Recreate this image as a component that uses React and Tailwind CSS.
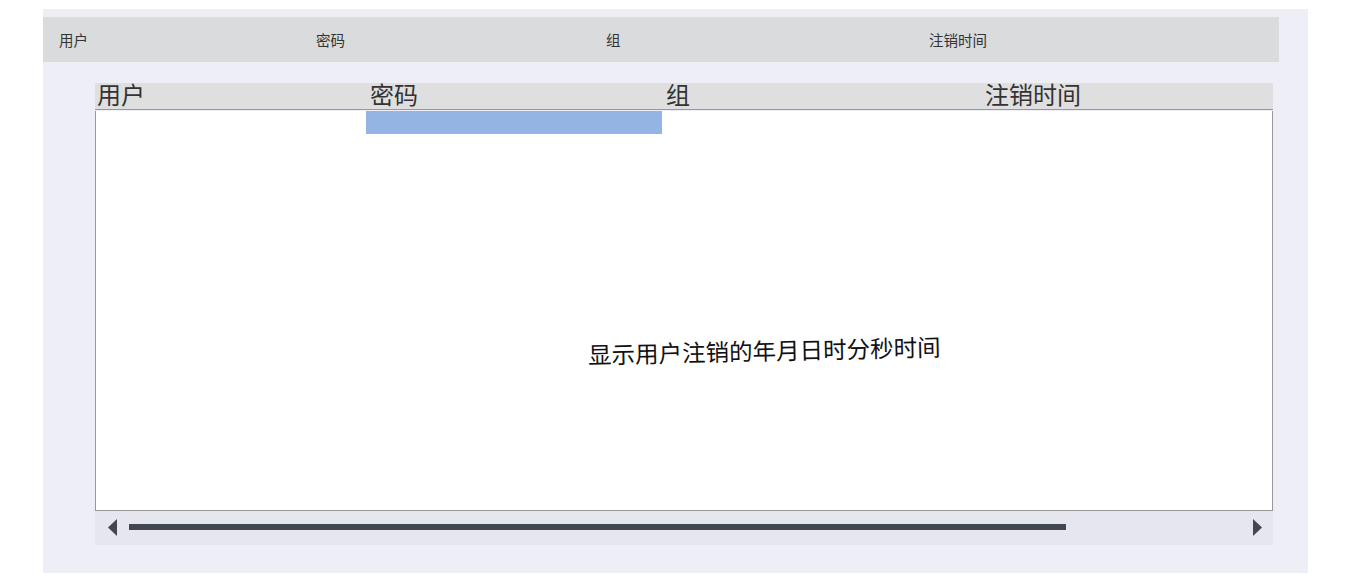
export default function App() {
  const sans = { fontFamily: '"Noto Sans CJK SC", "Noto Sans", sans-serif' }
  return (
    <div className="w-[1350px] h-[581px] bg-white pt-[9px] pl-[43px]" style={sans}>
      <div className="w-[1265px] h-[564px] bg-[#eeeef7] pt-[8px]">
        {/* top header */}
        <div className="w-[1236px] h-[45px] bg-[#dadbdd] grid grid-cols-[257px_290px_323px_1fr] items-center pl-[16px] text-[14.5px] text-[#333]">
          <span>用户</span>
          <span>密码</span>
          <span>组</span>
          <span>注销时间</span>
        </div>

        {/* inner table */}
        <div className="ml-[52px] mt-[21px] w-[1178px]">
          <div className="h-[27px] bg-[#dfdfdf] grid grid-cols-[271px_296px_323px_1fr] items-center text-[24px] leading-none text-[#333] border-b border-[#999]" style={{ fontFamily: '"Liberation Serif", "Noto Sans CJK SC", serif' }}>
            <span className="pl-[2px]">用户</span>
            <span className="pl-[4px]">密码</span>
            <span className="pl-[4px]">组</span>
            <span>注销时间</span>
          </div>
          <div className="h-[400px] bg-white border-x border-b border-[#999] relative">
            <div className="ml-[270px] mt-[1px] w-[296px] h-[23px] bg-[#94b4e4]" />
            <div className="absolute left-[492px] top-[222px] text-[23.5px] text-[#111] -rotate-[1.3deg] whitespace-nowrap">
              显示用户注销的年月日时分秒时间
            </div>
          </div>
          {/* scrollbar */}
          <div className="h-[34px] bg-[#e6e6ef] flex items-center pl-[13px] pr-[11px] pb-[2px]">
            <svg width="9" height="17" viewBox="0 0 9 17"><path d="M9 0 L0 8.5 L9 17 Z" fill="#414853" /></svg>
            <div className="ml-[12px] w-[937px] h-[6px] bg-[#414853]" />
            <div className="flex-1" />
            <svg width="9" height="17" viewBox="0 0 9 17"><path d="M0 0 L9 8.5 L0 17 Z" fill="#414853" /></svg>
          </div>
        </div>
      </div>
    </div>
  )
}
